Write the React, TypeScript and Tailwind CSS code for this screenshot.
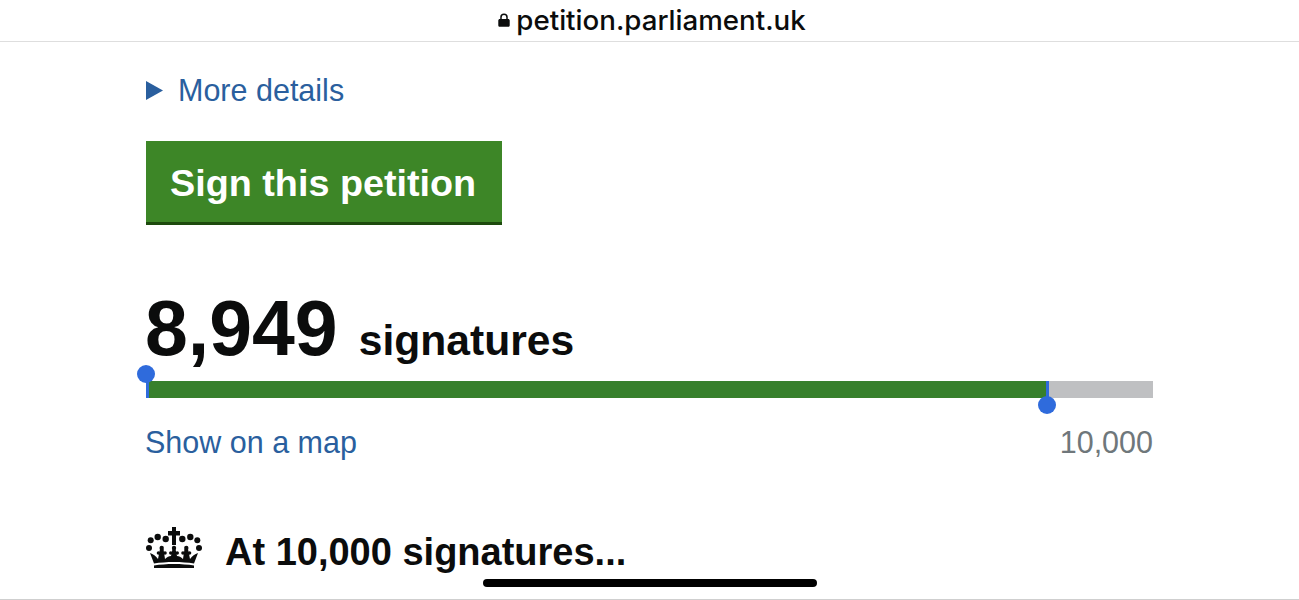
export default function App() {
  return (
    <div className="relative h-[600px] overflow-hidden bg-white font-['Liberation_Sans',Arial,sans-serif] text-[#0b0c0c]">
      {/* Safari address bar */}
      <div className="flex h-[42px] items-center justify-center gap-[6px] border-b border-[#dedede] pl-[5px]">
        <svg className="mt-[-1px] h-[14px] w-[12px]" viewBox="0 0 11 13" fill="#0b0c0c">
          <path d="M2 5.5V4a3.5 3.5 0 0 1 7 0v1.5h.3c.9 0 1.5.6 1.5 1.5v4.300c0 .9-.6 1.500-1.500 1.500H1.700C.8 12.800.2 12.200.2 11.300V7c0-.9.6-1.500 1.500-1.500zm1.400 0h4.200V4a2.100 2.100 0 0 0-4.200 0z" />
        </svg>
        <span className="text-[27.700px] font-medium leading-none font-['Inter',sans-serif]">petition.parliament.uk</span>
      </div>

      <div className="mx-[146px] w-[1007px]">
        {/* Details toggle */}
        <div className="mt-[30px] flex h-[36px] items-center gap-[15px] text-[#2a5f9e]">
          <svg className="h-[19px] w-[17px]" viewBox="0 0 17 19" fill="currentColor">
            <path d="M0 0l17 9.500L0 19z" />
          </svg>
          <span className="text-[30.500px] leading-none">More details</span>
        </div>

        <button className="mt-[33px] block h-[84px] w-[356px] border-b-[3px] border-[#1d4a0d] bg-[#3d8627] pl-[24px] pt-[4px] text-left text-[37.750px] font-bold leading-none text-white">
          Sign this petition
        </button>

        {/* Signature count */}
        <div className="mt-[65px] flex h-[72px] items-baseline gap-[21px] font-bold leading-none">
          <span className="ml-[-1px] text-[77px]">8,949</span>
          <span className="text-[42.600px]">signatures</span>
        </div>

        <div className="relative mt-[19px] flex h-[17px] bg-[#bfc0c2]">
          <div className="h-full w-[903px] border-l-[3px] border-r-[3px] border-[#2f6bdc] bg-[#37802c]" />
          <div className="absolute left-[-9px] top-[-16px] h-[18px] w-[18px] rounded-full bg-[#2f6bdc]" />
          <div className="absolute left-[892px] top-[15px] h-[18px] w-[18px] rounded-full bg-[#2f6bdc]" />
        </div>

        <div className="mt-[27px] flex items-center justify-between text-[30.500px] leading-[34px]">
          <span className="ml-[-1px] text-[#2a5f9e]">Show on a map</span>
          <span className="text-[#6f777b]">10,000</span>
        </div>

        {/* Next threshold */}
        <div className="mt-[68px] flex items-start gap-[22px]">
          <svg className="h-[43px] w-[57px]" viewBox="0 0 57 43" fill="#0b0c0c">
            <path d="M26 0h4v4h4v4.500h-4V18h-4V8.500h-4V4h4z" />
            <circle cx="19.700" cy="12" r="3.200" />
            <circle cx="36.300" cy="12" r="3.200" />
            <circle cx="11.700" cy="10" r="3.200" />
            <circle cx="44.300" cy="10" r="3.200" />
            <circle cx="4.700" cy="13.300" r="3" />
            <circle cx="51.300" cy="13.300" r="3" />
            <circle cx="3" cy="21" r="3" />
            <circle cx="53" cy="21" r="3" />
            <circle cx="15.700" cy="21" r="2.200" />
            <circle cx="28" cy="21" r="2.200" />
            <circle cx="40.300" cy="21" r="2.200" />
            <circle cx="12.500" cy="26" r="1.800" />
            <circle cx="19" cy="26" r="1.800" />
            <circle cx="24.800" cy="26" r="1.800" />
            <circle cx="31.200" cy="26" r="1.800" />
            <circle cx="37" cy="26" r="1.800" />
            <circle cx="43.500" cy="26" r="1.800" />
            <path d="M4 26C7 27 10 29 12 32L14 22H17.500L19 32C21 30 23 29 25 29L26.500 22H29.500L31 29C33 29 35 30 37 32L38.500 22H42L44 32C46 29 49 27 52 26L48 36.500C36 34.500 20 34.500 8 36.500Z" />
            <path d="M8 38.500C20 36.500 36 36.500 48 38.500L48 41H8Z" />
          </svg>
          <span className="mt-[6px] text-[38px] font-bold leading-none">At 10,000 signatures...</span>
        </div>
      </div>

      {/* Home indicator */}
      <div className="absolute left-[483px] top-[579px] h-[8px] w-[334px] rounded-full bg-black" />
      <div className="absolute bottom-0 left-0 h-px w-full bg-[#cfcfcf]" />
    </div>
  );
}
